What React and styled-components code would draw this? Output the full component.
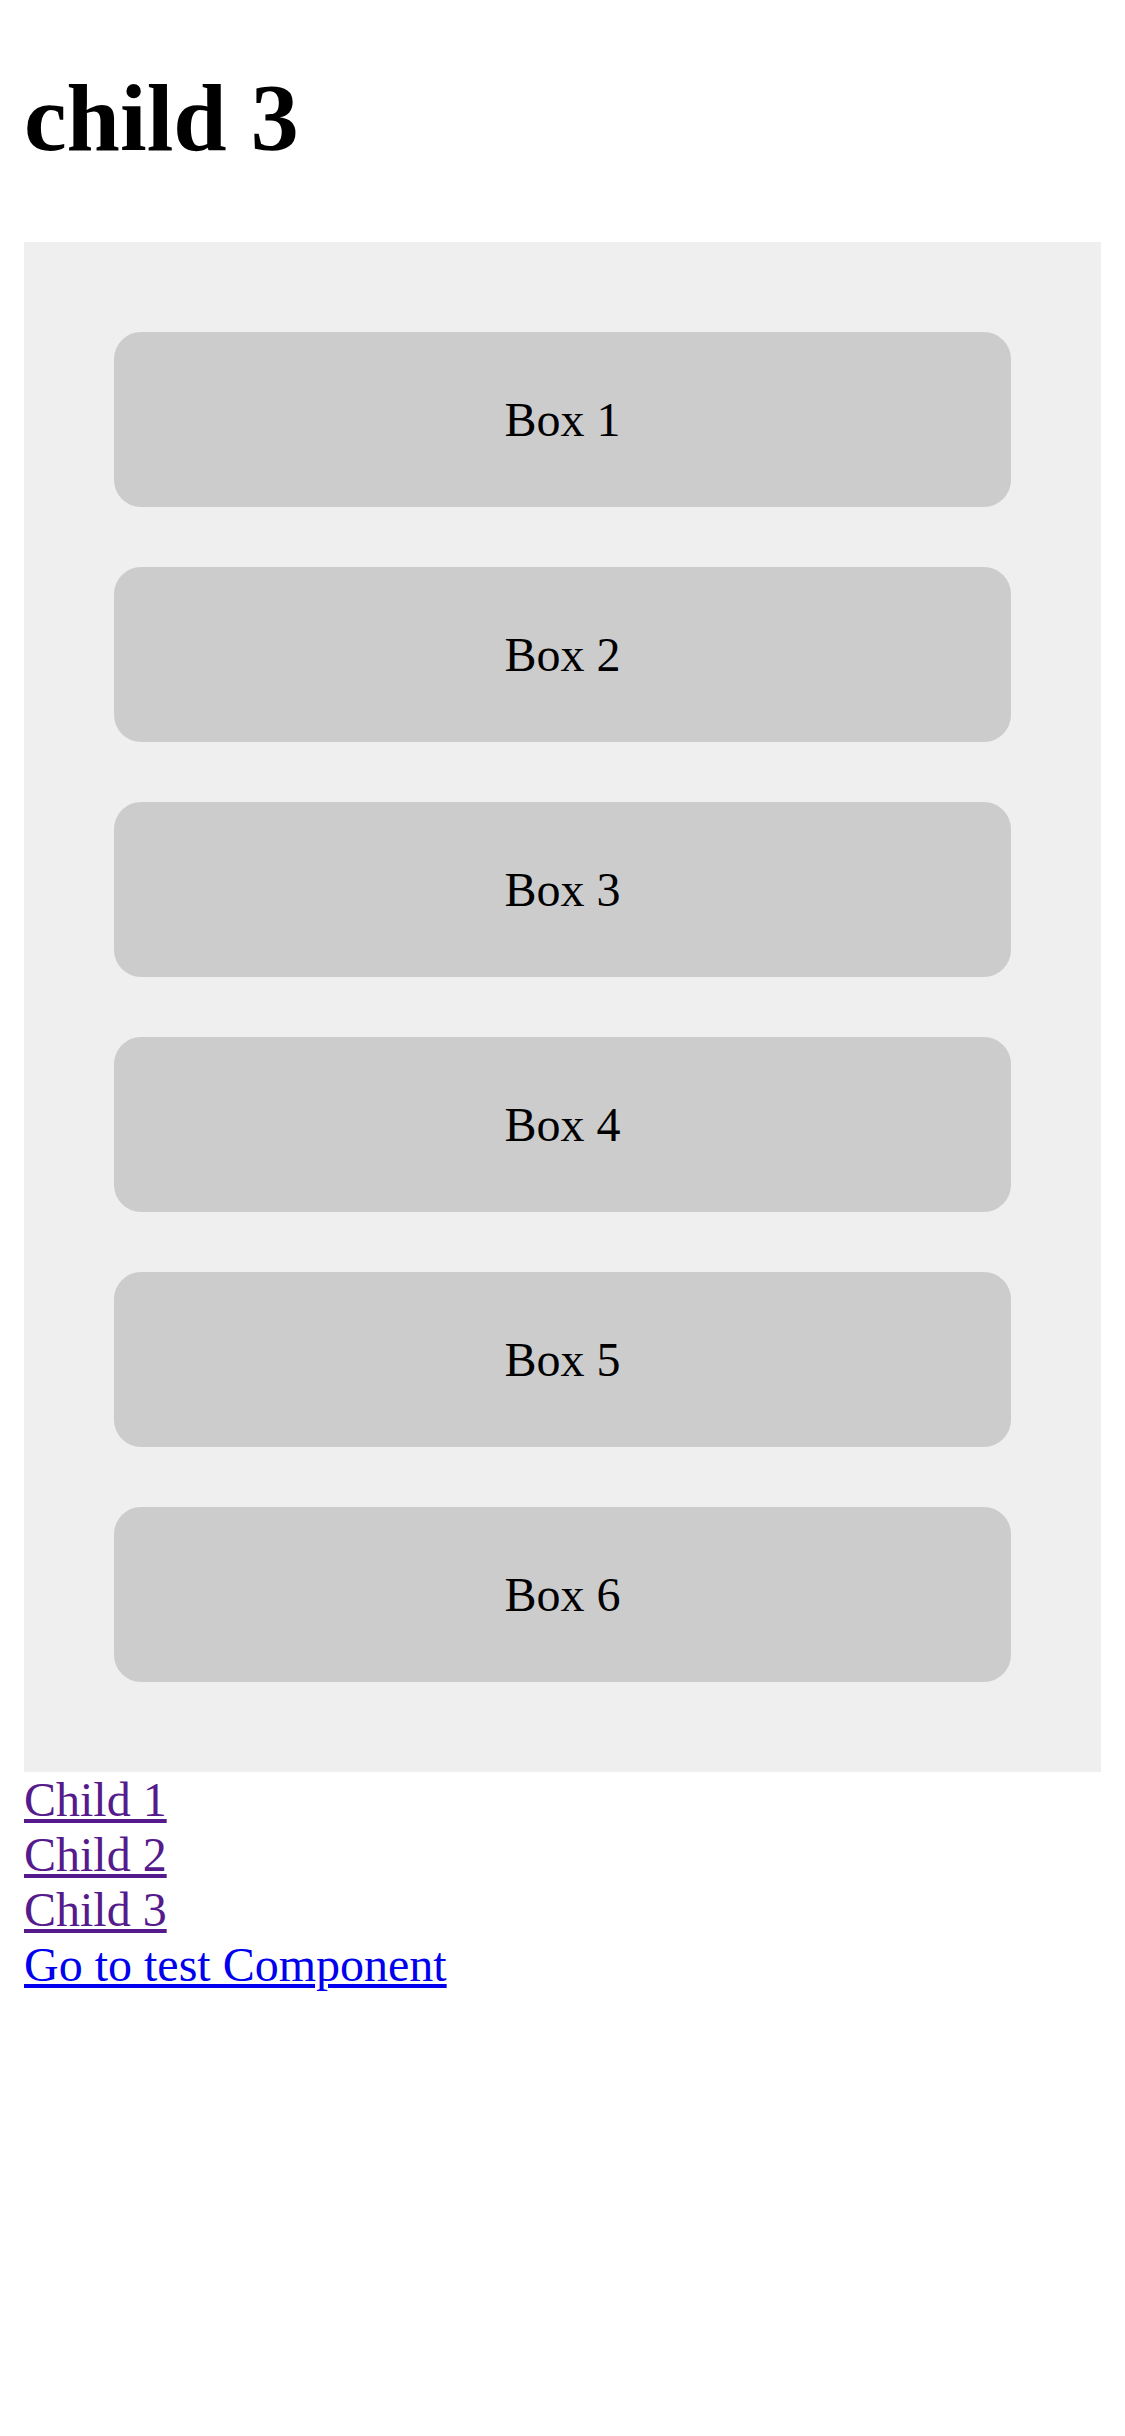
import React from 'react';
import styled, { createGlobalStyle } from 'styled-components';

const GlobalStyle = createGlobalStyle`
    body {
        margin: 24px;
        background: #fff;
        font-family: "Liberation Serif", "Times New Roman", serif;
        font-size: 48px;
        color: #000;
    }
`;

const Title = styled.h1`
    font-size: 96px;
    font-weight: 700;
    margin: 38px 0 69px;
`;

const Panel = styled.div`
    display: flex;
    flex-direction: column;
    gap: 60px;
    padding: 90px;
    background: #efefef;
`;

const Box = styled.div`
    padding: 60px 0;
    background: #cccccc;
    border-radius: 27px;
    text-align: center;
`;

const Links = styled.nav`
    display: flex;
    flex-direction: column;
    align-items: flex-start;
`;

const NavLink = styled.a`
    color: ${props => (props.visited ? '#551a8b' : '#0000ee')};
    text-decoration: underline;
`;

const boxes = [1, 2, 3, 4, 5, 6];

const links = [
    { label: 'Child 1', visited: true },
    { label: 'Child 2', visited: true },
    { label: 'Child 3', visited: true },
    { label: 'Go to test Component', visited: false }
];

export default () => (
    <>
        <GlobalStyle />
        <Title>child 3</Title>
        <Panel>
            {boxes.map(n => (
                <Box key={n}>Box {n}</Box>
            ))}
        </Panel>
        <Links>
            {links.map(link => (
                <NavLink key={link.label} href="#" visited={link.visited ? 1 : 0}>
                    {link.label}
                </NavLink>
            ))}
        </Links>
    </>
);
